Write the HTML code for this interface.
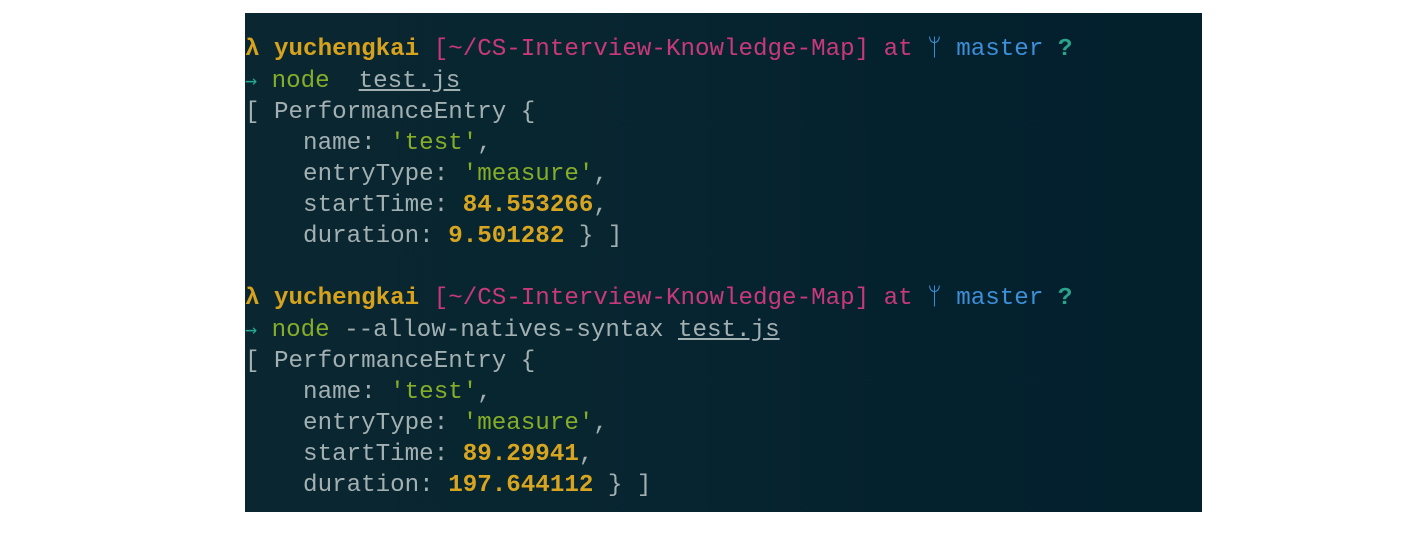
<!DOCTYPE html>
<html><head><style>
body{margin:0;background:#fff;width:1420px;height:533px;overflow:hidden}
#t{position:absolute;left:245px;top:13px;width:957px;height:499px;background:linear-gradient(90deg,#0a2731 0%,#072530 45%,#04212e 70%,#03202d 100%);}
pre{margin:0;position:absolute;left:0;top:21px;font-family:"Liberation Mono",monospace;font-size:24.2px;line-height:31px;color:#a3b0b2;white-space:pre}
.y{color:#d7a21c;font-weight:bold}.p{color:#c9397a}.g{color:#86ad28}.b{color:#3d8fd8}.c{color:#2aa38a;font-weight:bold}.n{color:#d8a520;font-weight:bold}.u{text-decoration:underline}.a{color:#27a88e;font-family:"DejaVu Sans Mono",monospace;font-size:20px}
</style></head><body><div id="t"><pre><span class="y">λ yuchengkai</span> <span class="p">[~/CS-Interview-Knowledge-Map] at</span> <span class="b">ᛘ master</span> <span class="c">?</span>
<span class="a">→</span> <span class="g">node</span>  <span class="u">test.js</span>
[ PerformanceEntry {
    name: <span class="g">'test'</span>,
    entryType: <span class="g">'measure'</span>,
    startTime: <span class="n">84.553266</span>,
    duration: <span class="n">9.501282</span> } ]

<span class="y">λ yuchengkai</span> <span class="p">[~/CS-Interview-Knowledge-Map] at</span> <span class="b">ᛘ master</span> <span class="c">?</span>
<span class="a">→</span> <span class="g">node</span> --allow-natives-syntax <span class="u">test.js</span>
[ PerformanceEntry {
    name: <span class="g">'test'</span>,
    entryType: <span class="g">'measure'</span>,
    startTime: <span class="n">89.29941</span>,
    duration: <span class="n">197.644112</span> } ]</pre></div></body></html>
